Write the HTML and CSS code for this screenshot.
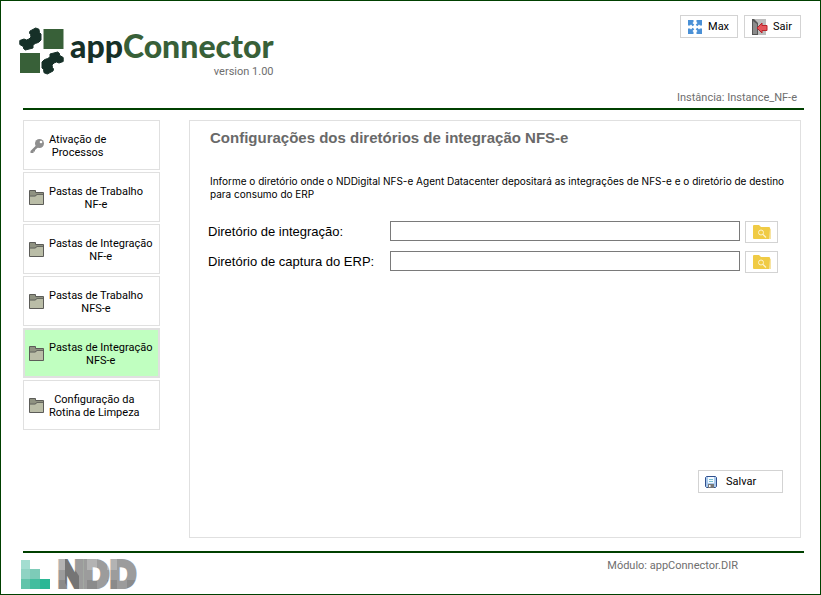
FILE: index.html
```html
<!DOCTYPE html>
<html lang="pt-BR">
<head>
    <meta charset="UTF-8">
    <meta name="viewport" content="width=device-width, initial-scale=1.0">
    <title>appConnector</title>
    <link rel="stylesheet" href="styles.css">
</head>
<body>
    <!-- shared icons -->
    <svg class="sprite" aria-hidden="true">
        <symbol id="folder" viewBox="0 0 16 16">
            <path d="M.5 14.500V.5H6.500V2.500H14.500V14.500Z" fill="#8f9281" stroke="#5c5c58"/>
            <path d="M1 14V6.500H6.500L8 5H14V14Z" fill="#babda7"/>
            <path d="M1 6H6L8 4.500H14.500" fill="none" stroke="#5c5c58" stroke-width=".8"/>
        </symbol>
        <symbol id="search-folder" viewBox="0 0 20 16">
            <path d="M1 2Q1 1 2 1H7L9 3H17Q18 3 18 4V14Q18 15 17 15H2Q1 15 1 14Z" fill="#f0cb45"/>
            <path d="M18 4.500Q19.500 4.500 19 6V15H17" fill="#f7e3a0"/>
            <circle cx="9" cy="8.500" r="2.500" fill="none" stroke="#fdf3cd"/>
            <path d="M11 10.500L14 13.500" stroke="#fdf3cd" stroke-width="1.2"/>
        </symbol>
    </svg>

    <div class="window">
        <header class="header">
            <div class="brand">
                <svg class="brand-mark" viewBox="0 0 46 50" aria-hidden="true">
                    <defs>
                        <path id="gear" d="M11 5L16.700 2L20 3.300L20.500 6.700L22 8V14L19.700 16.300L16.300 17.500L14 19V22L6.300 24L4.500 22.500V20.700L.8 18.500V14.500L5 13L7.500 14L10 13L12 11L11.500 8.500L10.500 7Z" fill="#163028" stroke="#163028" stroke-linejoin="round"/>
                    </defs>
                    <path d="M24.500 3H44.500V23H24.500Z" fill="#386038"/>
                    <path d="M1 27H21V47H1Z" fill="#386038"/>
                    <use href="#gear"/>
                    <use href="#gear" transform="rotate(180 22.500 25)"/>
                </svg>
                <div class="brand-name">
                    <h1><span>app</span>Connector</h1>
                    <p>version 1.00</p>
                </div>
            </div>
            <div class="header-side">
                <div class="window-actions">
                    <button class="btn" type="button">
                        <svg width="16" height="16" viewBox="0 0 16 16" fill="#4a90d6" aria-hidden="true">
                            <path id="arrow" d="M1 1H6.500V3L5.500 4L7.300 5.700L5.700 7.300L4 5.500L3 6.500H1Z"/>
                            <use href="#arrow" transform="rotate(90 8 8)"/>
                            <use href="#arrow" transform="rotate(180 8 8)"/>
                            <use href="#arrow" transform="rotate(270 8 8)"/>
                        </svg>
                        Max
                    </button>
                    <button class="btn" type="button">
                        <svg width="17" height="16" viewBox="0 0 17 16" aria-hidden="true">
                            <path d="M1 0H15V16H1Z" fill="#bdbdbd"/>
                            <path d="M1 0H3L7 4V16H1Z" fill="#555"/>
                            <path d="M2 2L6 5V15H2Z" fill="#8a8a8a"/>
                            <path d="M6 9L11 4V6.500H16V11.500H11V14Z" fill="#e4555a" stroke="#b8232a"/>
                        </svg>
                        Sair
                    </button>
                </div>
                <p class="muted">Instância: Instance_NF-e</p>
            </div>
        </header>

        <main class="content">
            <nav class="menu">
                <button type="button">
                    <svg width="16" height="16" viewBox="0 0 16 16" aria-hidden="true">
                        <path d="M8 6.500L1.500 13V15H4.500V13.500H6V12L10 8.500" fill="#8b8b8b"/>
                        <circle cx="10.500" cy="5.500" r="4.500" fill="#8f8f8f"/>
                        <circle cx="12" cy="4" r="1.300" fill="#fff"/>
                    </svg>
                    <span>Ativação de<br>Processos</span>
                </button>
                <button type="button">
                    <svg width="16" height="16" aria-hidden="true"><use href="#folder"/></svg>
                    <span>Pastas de Trabalho<br>NF-e</span>
                </button>
                <button type="button">
                    <svg width="16" height="16" aria-hidden="true"><use href="#folder"/></svg>
                    <span>Pastas de Integração<br>NF-e</span>
                </button>
                <button type="button">
                    <svg width="16" height="16" aria-hidden="true"><use href="#folder"/></svg>
                    <span>Pastas de Trabalho<br>NFS-e</span>
                </button>
                <button class="active" type="button">
                    <svg width="16" height="16" aria-hidden="true"><use href="#folder"/></svg>
                    <span>Pastas de Integração<br>NFS-e</span>
                </button>
                <button type="button">
                    <svg width="16" height="16" aria-hidden="true"><use href="#folder"/></svg>
                    <span>Configuração da<br>Rotina de Limpeza</span>
                </button>
            </nav>

            <form class="panel">
                <h2>Configurações dos diretórios de integração NFS-e</h2>
                <p class="intro">Informe o diretório onde o NDDigital NFS-e Agent Datacenter depositará as integrações de NFS-e e o diretório de destino para consumo do ERP</p>

                <div class="field">
                    <label for="integracao">Diretório de integração:</label>
                    <input id="integracao" type="text">
                    <button class="browse" type="button" aria-label="Procurar diretório de integração">
                        <svg width="20" height="16" aria-hidden="true"><use href="#search-folder"/></svg>
                    </button>
                </div>
                <div class="field">
                    <label for="captura">Diretório de captura do ERP:</label>
                    <input id="captura" type="text">
                    <button class="browse" type="button" aria-label="Procurar diretório de captura">
                        <svg width="20" height="16" aria-hidden="true"><use href="#search-folder"/></svg>
                    </button>
                </div>

                <button class="btn save" type="button">
                    <svg width="12" height="12" viewBox="0 0 12 12" aria-hidden="true">
                        <path d="M1.500 .5H10.500L11.500 1.500V10.500L10.500 11.500H1.500L.5 10.500V1.500Z" fill="#a9c9ec" stroke="#31508e"/>
                        <path d="M3 1H9V7H3Z" fill="#f4faff"/>
                        <path d="M4 3.500H8M4 5.500H8" stroke="#77bfd0"/>
                        <path d="M3 8H9V12H3Z" fill="#777"/>
                        <path d="M4 9H5.500V11H4Z" fill="#fff"/>
                    </svg>
                    Salvar
                </button>
            </form>
        </main>

        <footer class="footer">
            <svg class="ndd" width="120" height="32" viewBox="0 0 120 32" role="img" aria-label="NDD">
                <defs>
                    <pattern id="tiles" width="120" height="40" patternUnits="userSpaceOnUse">
                        <path d="M0 0H120V40H0Z" fill="#9c9c9c"/>
                        <path d="M37 0H48V11H37ZM67 0H77V11H67ZM87 0H97V11H87Z" fill="#b3b3b3"/>
                        <path d="M37 21H48V40H37ZM67 21H77V40H67ZM87 21H97V40H87ZM107 21H120V40H107Z" fill="#8b8b8b"/>
                        <path d="M48 0L59 17V40H55L45 24V0Z" fill="#757575"/>
                    </pattern>
                </defs>
                <path d="M1 1H10V10H1Z" fill="#a3ddd0"/>
                <path d="M1 10H10V20H1Z" fill="#8fd3c3"/>
                <path d="M10 10H20V20H10Z" fill="#7dcbb8"/>
                <path d="M1 20H10V30H1Z" fill="#62c4aa"/>
                <path d="M10 20H20V30H10Z" fill="#43bd9e"/>
                <path d="M20 20H30V30H20Z" fill="#2bb795"/>
                <text x="38 63 90" y="28" fill="url(#tiles)" stroke="url(#tiles)">NDD</text>
            </svg>
            <p class="muted">Módulo: appConnector.DIR</p>
        </footer>
    </div>
</body>
</html>
```
FILE: styles.css
```css
* {
    padding: 0;
    margin: 0;
    box-sizing: border-box;
}
body {
    font-family: Roboto, Arial, sans-serif;
    font-size: 11px;
    line-height: 13px;
    color: #000;
    background: #fff;
}
button, input {
    font: inherit;
    color: inherit;
}
.sprite {
    display: none;
}
.window {
    min-height: 100vh;
    display: flex;
    flex-direction: column;
    border: 1px solid #004000;
    padding: 0 16px 0 22px;
}
.header {
    display: flex;
    justify-content: space-between;
    border-bottom: 2px solid #004000;
    padding-top: 14px;
}
.brand {
    display: flex;
    align-items: flex-start;
    padding-top: 11px;
    margin-left: -4px;
}
.brand-mark {
    width: 46px;
    height: 50px;
}
.brand-name {
    text-align: right;
    margin-left: 5px;
}
.brand-name h1 {
    font-family: Lato, sans-serif;
    font-size: 32px;
    font-weight: 900;
    line-height: 39px;
    color: #386038;
}
.brand-name h1 span {
    color: #163028;
}
.brand-name p, .muted {
    color: #6e6e6e;
}
.header-side {
    display: flex;
    flex-direction: column;
    align-items: flex-end;
    justify-content: space-between;
    min-height: 93px;
    padding: 0 3px 4px 0;
}
.header-side .muted {
    padding-right: 4px;
}
.window-actions {
    display: flex;
    gap: 6px;
}
.btn {
    display: flex;
    align-items: center;
    gap: 5px;
    height: 23px;
    padding: 0 8px 0 6px;
    background: #fff;
    border: 1px solid #d3d3d3;
    cursor: pointer;
}
.content {
    flex: 1;
    display: flex;
    gap: 29px;
    padding: 10px 3px 13px 0;
}
.menu {
    width: 137px;
    display: flex;
    flex-direction: column;
    gap: 2px;
}
.menu button {
    display: flex;
    align-items: center;
    gap: 4px;
    height: 50px;
    padding: 2px 5px 0;
    background: #fff;
    border: 1px solid #e0e0e0;
    cursor: pointer;
}
.menu .active {
    background: #c0ffc0;
    border: 2px solid #e0e0e0;
    padding: 2px 4px 0;
}
.panel {
    flex: 1;
    display: flex;
    flex-direction: column;
    border: 1px solid #e0e0e0;
    padding: 8px 12px 44px 18px;
}
.panel h2 {
    font-family: "Liberation Sans", Arial, sans-serif;
    font-size: 15px;
    line-height: 18px;
    color: #696969;
    padding-left: 2px;
}
.intro {
    font-family: Inter, sans-serif;
    font-size: 10px;
    margin: 28px 0 20px;
    padding-left: 2px;
}
.field {
    display: flex;
    gap: 5px;
    height: 22px;
    margin-bottom: 8px;
    padding-right: 10px;
}
.field label {
    width: 177px;
    font-family: "Liberation Sans", Arial, sans-serif;
    font-size: 13px;
    line-height: 21px;
}
.field input {
    flex: 1;
    height: 20px;
    padding: 0 4px;
    border: 1px solid #7a7a7a;
}
.browse {
    display: flex;
    align-items: center;
    justify-content: center;
    width: 33px;
    background: #fff;
    border: 1px solid #d3d3d3;
    cursor: pointer;
}
.save {
    width: 85px;
    gap: 9px;
    margin: auto 5px 0 auto;
}
.footer {
    display: flex;
    justify-content: space-between;
    border-top: 2px solid #004000;
    padding: 6px 66px 3px 0;
}
.ndd {
    margin-left: -3px;
    overflow: visible;
}
.ndd text {
    font-family: "Liberation Sans", Arial, sans-serif;
    font-size: 36px;
    font-weight: bold;
    stroke-width: 4px;
}
```
